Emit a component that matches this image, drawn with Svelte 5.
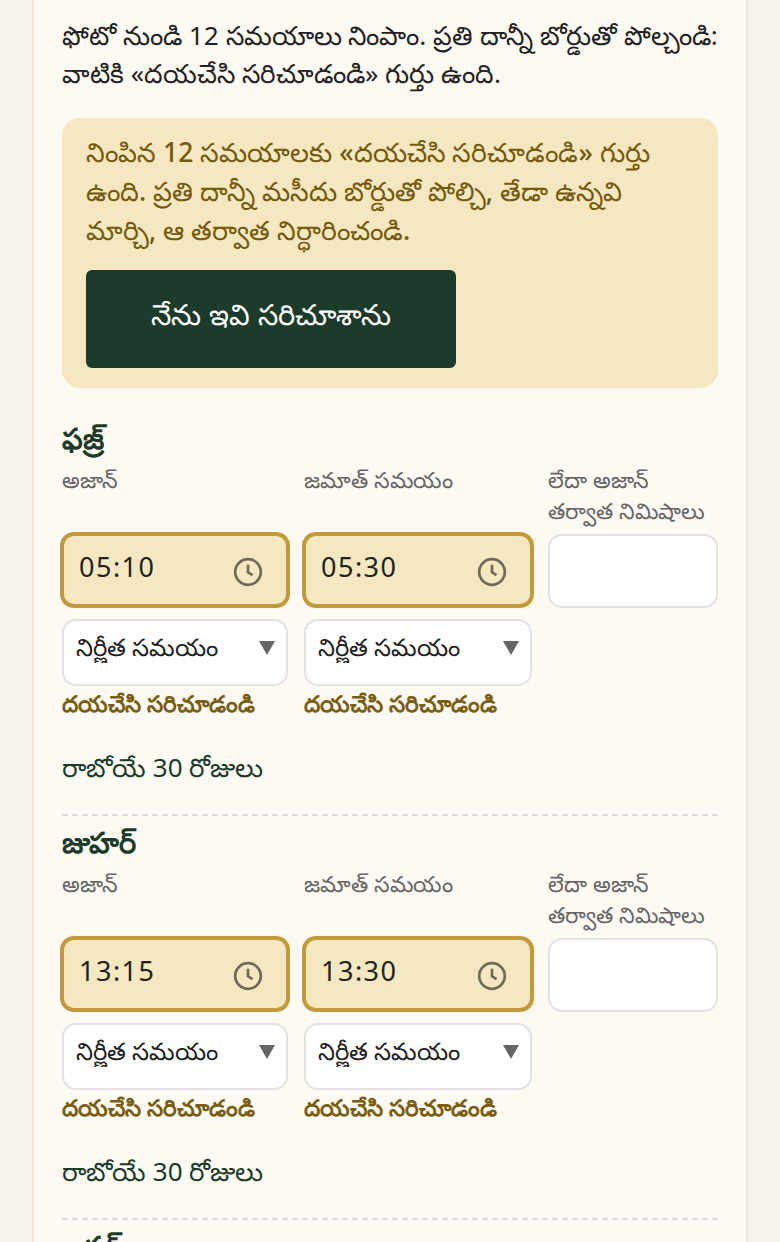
<script>
	const prayers = [
		{ name: 'ఫజ్ర్', adhan: '05:10', jamaat: '05:30' },
		{ name: 'జుహర్', adhan: '13:15', jamaat: '13:30' },
		{ name: 'అసర్', adhan: '16:45', jamaat: '17:00' }
	];
</script>

{#snippet timeField(label, value)}
	<div class="field">
		<span class="label">{label}</span>
		<div class="time">
			<span>{value}</span>
			<svg viewBox="0 0 24 24" width="32" height="32" fill="none" stroke="#6f6a58" stroke-width="2">
				<circle cx="12" cy="12" r="9.6" />
				<path d="M12 6.6v5.6l3.4 2.2" />
			</svg>
		</div>
		<select>
			<option>నిర్ణీత సమయం</option>
		</select>
		<span class="check">దయచేసి సరిచూడండి</span>
	</div>
{/snippet}

<main class="card">
	<p class="intro">ఫోటో నుండి 12 సమయాలు నింపాం. ప్రతి దాన్నీ బోర్డుతో పోల్చండి: వాటికి «దయచేసి సరిచూడండి» గుర్తు ఉంది.</p>

	<div class="notice">
		<p>నింపిన 12 సమయాలకు «దయచేసి సరిచూడండి» గుర్తు ఉంది. ప్రతి దాన్నీ మసీదు బోర్డుతో పోల్చి, తేడా ఉన్నవి మార్చి, ఆ తర్వాత నిర్ధారించండి.</p>
		<button type="button">నేను ఇవి సరిచూశాను</button>
	</div>

	{#each prayers as prayer}
		<section class="prayer">
			<h3>{prayer.name}</h3>
			<div class="fields">
				{@render timeField('అజాన్', prayer.adhan)}
				{@render timeField('జమాత్ సమయం', prayer.jamaat)}
				<div class="field">
					<span class="label">లేదా అజాన్ తర్వాత నిమిషాలు</span>
					<input type="number" />
				</div>
			</div>
			<div class="range">రాబోయే 30 రోజులు</div>
		</section>
	{/each}
</main>

<style>
	:global(body) {
		margin: 0;
		background: #f7f3ec;
		font-family: 'Noto Sans', 'DejaVu Sans', sans-serif;
		color: #222;
		height: 1242px;
		overflow: hidden;
	}

	.card {
		width: 656px;
		margin: 0 auto;
		padding: 16px 28px 0;
		background: #fdfaf4;
		border-left: 2px solid #f1e8d8;
		border-right: 2px solid #f1e8d8;
	}

	.intro {
		margin: 0 0 26px;
		font-size: 26.25px;
		line-height: 38px;
	}

	.notice {
		margin-bottom: 24px;
		padding: 15px 24px 20px;
		background: #f5e8c0;
		border-radius: 18px;
		color: #75590c;
	}

	.notice p {
		margin: 0 0 20px;
		font-size: 26.6px;
		line-height: 39px;
		font-weight: 500;
	}

	.notice button {
		display: block;
		width: 370px;
		height: 98px;
		padding-bottom: 6px;
		border: 0;
		border-radius: 6px;
		background: #1c3b2a;
		color: #fff;
		font: inherit;
		font-size: 29px;
		font-weight: 500;
	}

	.prayer {
		padding: 5px 0 28px;
		border-bottom: 2px dashed #ddd;
	}

	h3 {
		margin: 0 0 5px;
		font-size: 29px;
		line-height: 42px;
		font-weight: 700;
		color: #1c3b2a;
	}

	.fields {
		display: grid;
		grid-template-columns: 226px 228px 170px;
		gap: 16px;
	}

	.field {
		display: flex;
		flex-direction: column;
	}

	.label {
		min-height: 62px;
		margin-bottom: 8px;
		font-size: 22.2px;
		line-height: 31px;
		color: #666;
	}

	.time {
		display: flex;
		align-items: center;
		justify-content: space-between;
		box-sizing: border-box;
		height: 76px;
		margin: -2px -2px 0;
		padding: 0 22px 0 15px;
		background: #f5e8c0;
		border: 4px solid #c4993a;
		border-radius: 14px;
		font-size: 27px;
		letter-spacing: 1.5px;
	}

	.time span {
		margin-top: -8px;
	}

	.time svg {
		margin-top: 4px;
	}

	select {
		box-sizing: border-box;
		height: 67px;
		margin-top: 11px;
		padding: 0 12px 13px;
		appearance: none;
		background: #fff url("data:image/svg+xml,%3Csvg xmlns='http://www.w3.org/2000/svg' width='16' height='14'%3E%3Cpath d='M0 0h16L8 14z' fill='%23666'/%3E%3C/svg%3E") no-repeat right 11px top 20px;
		border: 2px solid #e2e2e2;
		border-radius: 14px;
		font: inherit;
		font-size: 24.2px;
		color: #222;
	}

	input {
		box-sizing: border-box;
		height: 74px;
		background: #fff;
		border: 2px solid #e2e2e2;
		border-radius: 14px;
	}

	.check {
		margin-top: 1px;
		font-size: 23px;
		line-height: 32px;
		font-weight: 600;
		color: #7a5e12;
	}

	.range {
		margin-top: 29px;
		font-size: 26.1px;
		line-height: 38px;
		color: #1c3b2a;
	}
</style>
